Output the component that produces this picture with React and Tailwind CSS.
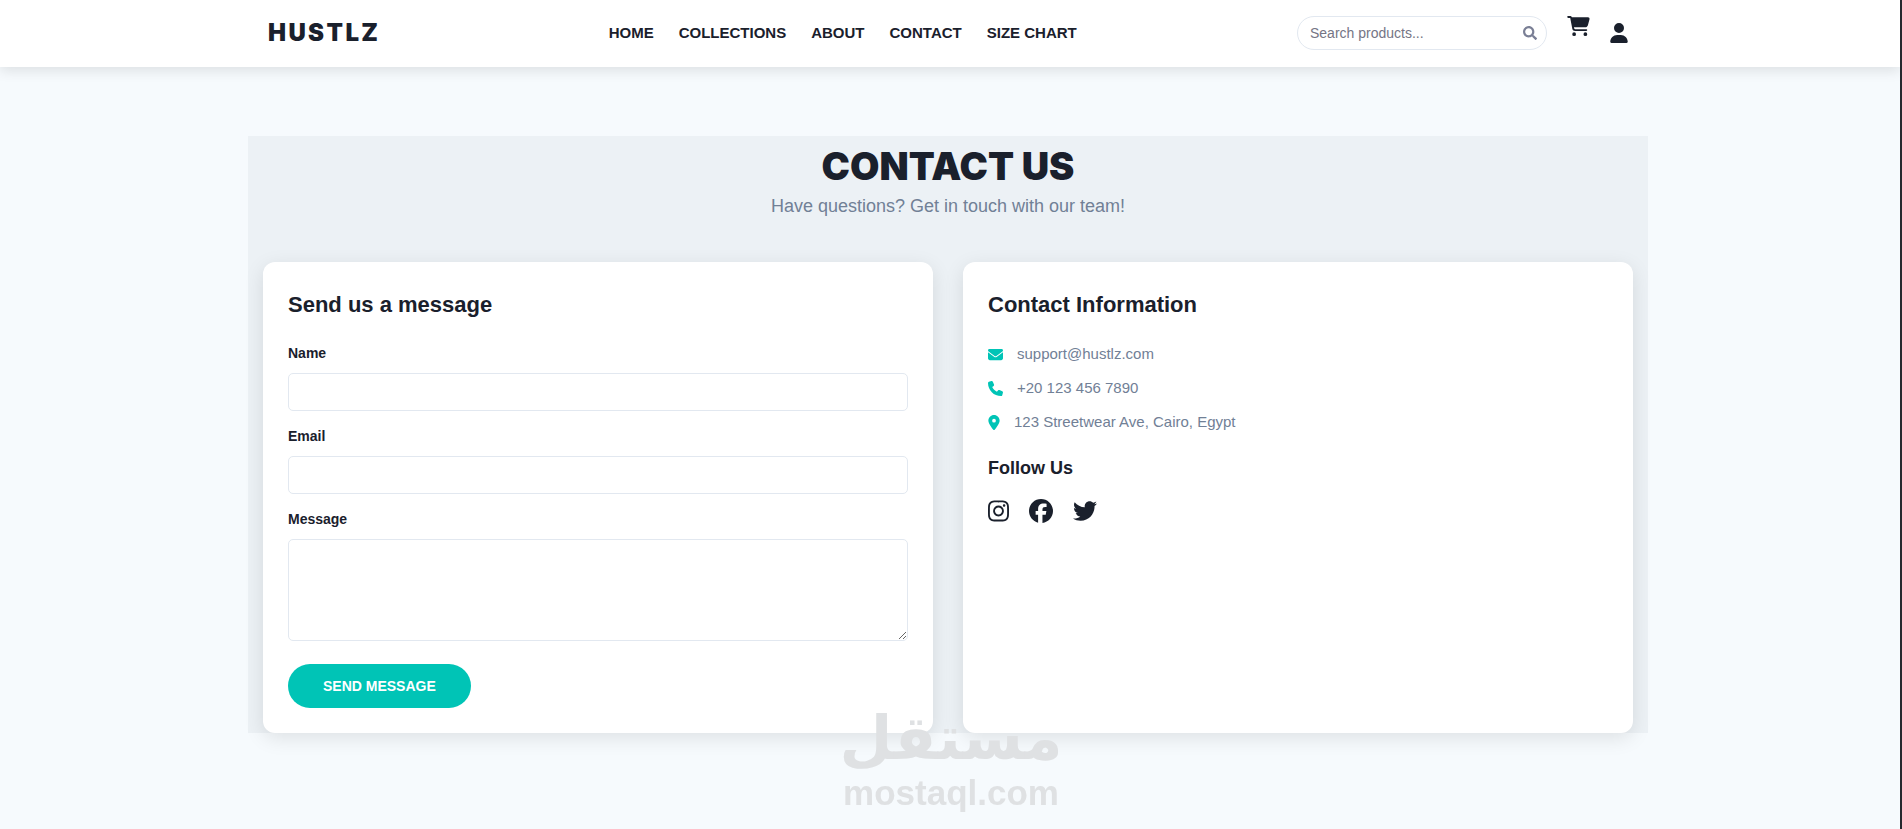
import React, { useState } from "react";
import { FaSearch } from "react-icons/fa";
import {
  FaCartShopping,
  FaEnvelope,
  FaFacebook,
  FaInstagram,
  FaLocationDot,
  FaPhone,
  FaTwitter,
  FaUser,
} from "react-icons/fa6";

const navLinks = ["Home", "Collections", "About", "Contact", "Size Chart"];

const contactInfo = [
  { icon: FaEnvelope, text: "support@hustlz.com", width: "w-[15px]" },
  { icon: FaPhone, text: "+20 123 456 7890", width: "w-[15px]" },
  { icon: FaLocationDot, text: "123 Streetwear Ave, Cairo, Egypt", width: "w-[12px]" },
];

const socials = [
  { icon: FaInstagram, name: "Instagram", width: "w-[21px]" },
  { icon: FaFacebook, name: "Facebook", width: "w-6" },
  { icon: FaTwitter, name: "Twitter", width: "w-6" },
];

const Header = () => {
  const [query, setQuery] = useState("");

  return (
    <header className="bg-white pr-1 shadow-[0_4px_12px_rgba(0,0,0,0.1)]">
      <div className="mx-auto flex max-w-[1400px] items-center justify-between px-5 pt-[15px] pb-[17px]">
        <a href="#" className="font-['Inter',sans-serif] text-2xl leading-[35px] font-black tracking-widest">
          HUSTLZ
        </a>
        <nav className="flex gap-[25px] pl-2">
          {navLinks.map((link) => (
            <a key={link} href="#" className="text-[15px] leading-6 font-semibold uppercase">
              {link}
            </a>
          ))}
        </nav>
        <div className="flex items-center gap-5">
          <form
            onSubmit={(e) => e.preventDefault()}
            className="flex h-[34px] w-[250px] items-center rounded-full border border-[#e2e8f0] pr-[9px] pl-3"
          >
            <input
              type="text"
              aria-label="Search products"
              placeholder="Search products..."
              value={query}
              onChange={(e) => setQuery(e.target.value)}
              className="min-w-0 flex-1 bg-transparent text-sm outline-none placeholder:text-[#757585]"
            />
            <button type="submit" aria-label="Search" className="text-sm text-[#7a7f95]">
              <FaSearch />
            </button>
          </form>
          <a href="#" aria-label="Cart" className="pb-[13px]">
            <FaCartShopping className="h-5 w-[23px]" />
          </a>
          <a href="#" aria-label="Account">
            <FaUser className="h-5 w-[18px]" />
          </a>
        </div>
      </div>
    </header>
  );
};

const Card = ({ title, children }) => (
  <section className="rounded-xl bg-white p-[25px] shadow-[0_5px_20px_rgba(0,0,0,0.1)]">
    <h2 className="mb-5 text-[22px] leading-[35px] font-semibold">{title}</h2>
    {children}
  </section>
);

const ContactForm = () => {
  const fieldStyle = "block w-full rounded-[5px] border border-[#e2e8f0] bg-white px-3 text-sm outline-none";
  const labelStyle = "mb-2 block text-sm leading-[23px] font-semibold";

  return (
    <form onSubmit={(e) => e.preventDefault()}>
      <div className="mb-[14px]">
        <label htmlFor="name" className={labelStyle}>Name</label>
        <input id="name" type="text" className={`${fieldStyle} h-[38px]`} />
      </div>
      <div className="mb-[14px]">
        <label htmlFor="email" className={labelStyle}>Email</label>
        <input id="email" type="email" className={`${fieldStyle} h-[38px]`} />
      </div>
      <div className="mb-[23px]">
        <label htmlFor="message" className={labelStyle}>Message</label>
        <textarea id="message" className={`${fieldStyle} h-[102px] resize-y py-2`} />
      </div>
      <button
        type="submit"
        className="rounded-full bg-[#00c4b6] px-[35px] py-3 text-sm leading-5 font-semibold text-white uppercase"
      >
        Send Message
      </button>
    </form>
  );
};

const ContactDetails = () => (
  <>
    <ul className="flex flex-col gap-[10px] text-[15px] leading-6 text-[#718096]">
      {contactInfo.map(({ icon: Icon, text, width }) => (
        <li key={text} className="flex items-center gap-[14px]">
          <Icon className={`h-[15px] text-[#00c4b6] ${width}`} />
          {text}
        </li>
      ))}
    </ul>
    <h3 className="mt-5 mb-4 text-lg leading-[29px] font-semibold">Follow Us</h3>
    <div className="flex gap-5">
      {socials.map(({ icon: Icon, name, width }) => (
        <a key={name} href="#" aria-label={name}>
          <Icon className={`h-6 ${width}`} />
        </a>
      ))}
    </div>
  </>
);

const Watermark = () => (
  <div className="pointer-events-none fixed inset-x-0 bottom-4 flex flex-col items-center text-[#dfe1e3]">
    <span lang="ar" dir="rtl" className="font-['DejaVu_Sans',sans-serif] text-[61px] leading-[70px] font-bold">
      مستقل
    </span>
    <span className="text-[35px] leading-10 font-bold">mostaql.com</span>
  </div>
);

export default function App() {
  return (
    <div className="min-h-screen overflow-hidden border-r-2 border-[#25282e] bg-[#f6fafd] font-['Liberation_Sans',Arial,sans-serif] text-[#1a202c]">
      <Header />
      <div className="pt-[69px] pr-1 pb-24">
        <main className="mx-auto max-w-[1400px] bg-[#ecf1f5] px-[15px]">
          <div className="pt-1 pb-[42px] text-center">
            <h1 className="font-['Inter',sans-serif] text-[38px] leading-[52px] font-black uppercase">Contact Us</h1>
            <p className="text-lg leading-7 text-[#718096]">Have questions? Get in touch with our team!</p>
          </div>
          <div className="grid gap-[30px] md:grid-cols-2">
            <Card title="Send us a message">
              <ContactForm />
            </Card>
            <Card title="Contact Information">
              <ContactDetails />
            </Card>
          </div>
        </main>
      </div>
      <Watermark />
    </div>
  );
}
